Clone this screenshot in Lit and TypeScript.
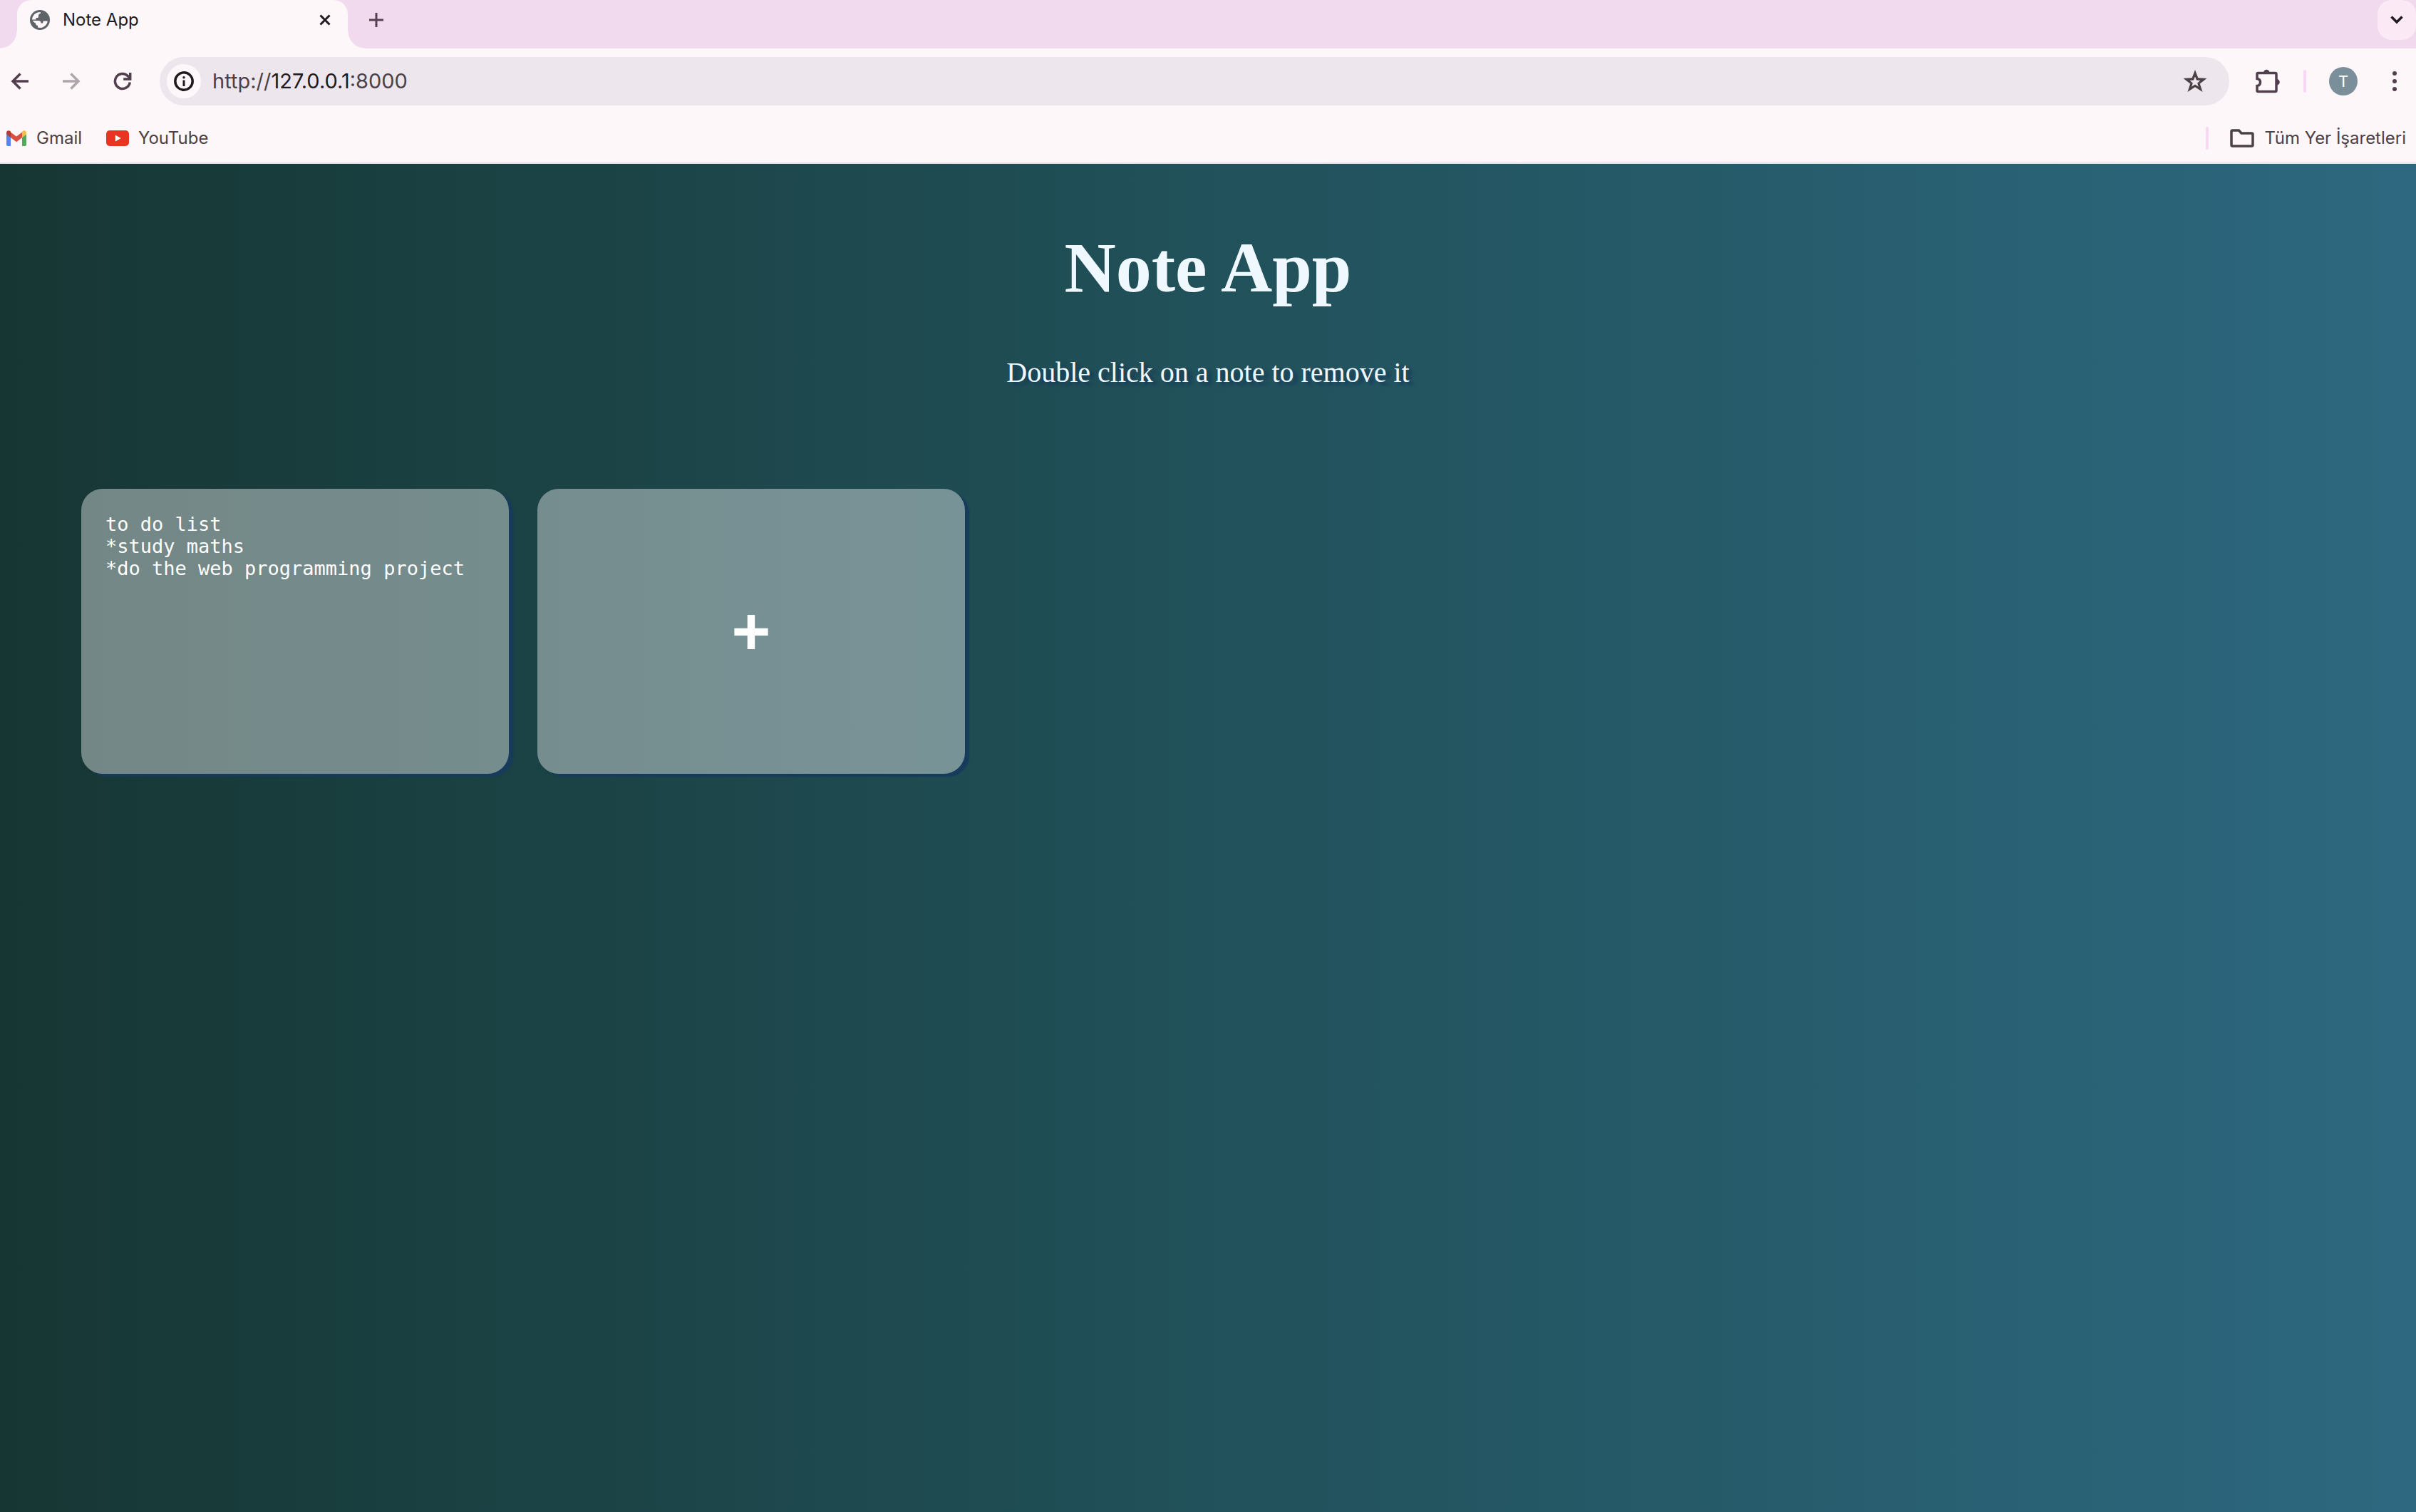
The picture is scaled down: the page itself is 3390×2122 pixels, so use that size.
import { LitElement, html, css } from "lit";
import { customElement, property, state } from "lit/decorators.js";

@customElement("browser-chrome")
export class BrowserChrome extends LitElement {
  @property() pageTitle = "";

  static styles = css`
    :host {
      display: block;
      font-family: Inter, "Liberation Sans", sans-serif;
      color: #4b4146;
      background: #fdf7fa;
      border-bottom: 2px solid #e9e0e7;
    }
    * {
      box-sizing: border-box;
    }
    button {
      border: 0;
      padding: 0;
      background: none;
      color: inherit;
      font: inherit;
      display: flex;
      align-items: center;
      justify-content: center;
      cursor: pointer;
    }
    svg {
      display: block;
      flex: none;
    }
    .tabs {
      display: flex;
      height: 68px;
      padding-left: 24px;
      background: #f2daee;
    }
    .tab {
      position: relative;
      display: flex;
      align-items: center;
      width: 464px;
      height: 68px;
      padding: 0 16px 12px 18px;
      gap: 18px;
      border-radius: 20px 20px 0 0;
      background: #fdf7fa;
      color: #1f1a1e;
      font-size: 24px;
      line-height: 28px;
    }
    .tab::before,
    .tab::after {
      content: "";
      position: absolute;
      bottom: 0;
      width: 24px;
      height: 24px;
    }
    .tab::before {
      right: 100%;
      background: radial-gradient(circle at 0 0, transparent 23px, #fdf7fa 24px);
    }
    .tab::after {
      left: 100%;
      background: radial-gradient(circle at 100% 0, transparent 23px, #fdf7fa 24px);
    }
    .label {
      flex: 1;
    }
    .close {
      width: 32px;
      height: 32px;
    }
    .add {
      width: 56px;
      height: 56px;
      margin-left: 12px;
      color: #56414f;
    }
    .search {
      width: 54px;
      height: 56px;
      margin-left: auto;
      border-radius: 20px;
      background: #fbeaf6;
      color: #1f1a1e;
    }
    .toolbar {
      display: flex;
      align-items: center;
      height: 92px;
      padding: 0 14px 0 0;
      color: #523f4d;
    }
    .nav {
      width: 56px;
      height: 56px;
      margin-right: 16px;
    }
    .nav.off {
      color: #aea6ab;
    }
    .omnibox {
      flex: 1;
      display: flex;
      align-items: center;
      height: 68px;
      margin-left: 8px;
      padding: 0 28px 0 10px;
      border-radius: 34px;
      background: #ede6ed;
    }
    .info {
      width: 48px;
      height: 48px;
      border-radius: 50%;
      background: #fdf7fa;
      color: #1f1a1e;
    }
    .url {
      flex: 1;
      margin-left: 16px;
      font-size: 29px;
      line-height: 36px;
      color: #4b4146;
      text-decoration: none;
    }
    .host {
      color: #1f1a1e;
    }
    .star {
      width: 40px;
      height: 40px;
      color: #4b4146;
    }
    .ext {
      width: 56px;
      height: 56px;
      margin-left: 26px;
    }
    .rule {
      width: 4px;
      height: 32px;
      border-radius: 2px;
      background: #f8d8f2;
    }
    .toolbar .rule {
      margin-left: 22px;
    }
    .avatar {
      width: 40px;
      height: 40px;
      margin-left: 32px;
      border-radius: 50%;
      background: #7b8f9b;
      color: #fff;
      font-size: 22px;
    }
    .more {
      width: 32px;
      height: 56px;
      margin-left: 36px;
    }
    .bookmarks {
      display: flex;
      align-items: center;
      height: 68px;
      padding: 0 14px 0 8px;
      font-size: 24px;
      line-height: 28px;
    }
    .bookmarks a {
      display: flex;
      align-items: center;
      gap: 13px;
      margin-right: 34px;
      color: inherit;
      text-decoration: none;
    }
    .bookmarks .rule {
      margin-left: auto;
      margin-right: 30px;
    }
    .bookmarks button {
      gap: 14px;
    }
  `;

  render() {
    return html`
      <div class="tabs">
        <div class="tab">
          <svg width="28" height="28" viewBox="0 0 28 28">
            <circle cx="14" cy="14" r="14" fill="#5f6368" />
            <path d="M14.500 3c.8 1 .8 1.600 0 2-2 .8-2.500 1.500-2.500 3v1.500c0 1-.8 1.500-2 1.500H8.500v2.500H3A11 11 0 0 1 14.500 3zM3.200 15H12c2.500 0 3.500 1.200 3.500 3.500h2.800V17c0-1 .6-1.500 1.600-1.500h4.900A11 11 0 0 1 11 24.600V22c-2-.2-2.800-1.200-2.800-3z" fill="#fdf7fa" />
          </svg>
          <span class="label">${this.pageTitle}</span>
          <button class="close" aria-label="Close tab">
            <svg width="16" height="16" viewBox="0 0 16 16" fill="none" stroke="currentColor" stroke-width="3"><path d="M1.500 1.500l13 13M14.500 1.500l-13 13" /></svg>
          </button>
        </div>
        <button class="add" aria-label="New tab">
          <svg width="20" height="20" viewBox="0 0 20 20" fill="none" stroke="currentColor" stroke-width="3"><path d="M10 0v20M0 10h20" /></svg>
        </button>
        <button class="search" aria-label="Search tabs">
          <svg width="18" height="12" viewBox="0 0 18 12" fill="none" stroke="currentColor" stroke-width="3.500"><path d="M1.500 1.500L9 9l7.500-7.500" /></svg>
        </button>
      </div>
      <div class="toolbar">
        <button class="nav" aria-label="Back">
          <svg width="26" height="26" viewBox="0 0 26 26" fill="none" stroke="currentColor" stroke-width="3.500"><path d="M25 13H3M13.500 2.500L3 13l10.500 10.500" /></svg>
        </button>
        <button class="nav off" aria-label="Forward">
          <svg width="26" height="26" viewBox="0 0 26 26" fill="none" stroke="currentColor" stroke-width="3.500"><path d="M1 13h22M12.500 2.500L23 13 12.500 23.500" /></svg>
        </button>
        <button class="nav" aria-label="Reload">
          <svg width="26" height="26" viewBox="0 0 26 26" fill="none" stroke="currentColor" stroke-width="3.500"><path d="M23.300 14.500A10.500 10.500 0 1 1 20.500 5.700L23 8.500M23.700 1v9h-9.500" /></svg>
        </button>
        <div class="omnibox">
          <button class="info" aria-label="Site information">
            <svg width="28" height="28" viewBox="0 0 28 28"><circle cx="14" cy="14" r="12.200" fill="none" stroke="currentColor" stroke-width="3.500" /><path d="M12.500 12.500h3v8.500h-3z" fill="currentColor" /><circle cx="14" cy="8.800" r="1.700" fill="currentColor" /></svg>
          </button>
          <a class="url" href="http://127.0.0.1:8000">http://<span class="host">127.0.0.1</span>:8000</a>
          <button class="star" aria-label="Bookmark this page">
            <svg width="34" height="32" viewBox="0 0 34 32"><path d="M17 0l4.300 11.300L33.500 12l-9.700 7.500L27.500 31 17 24.300 6.500 31l3.700-11.500L.5 12l12.200-.7zM17 9.500l-2 5-5.400.4 4.200 3.500-1.500 5.200 4.700-3 4.700 3-1.500-5.200 4.200-3.500-5.400-.4z" fill="currentColor" fill-rule="evenodd" /></svg>
          </button>
        </div>
        <button class="ext" aria-label="Extensions">
          <svg width="34" height="34" viewBox="0 0 34 34">
            <path d="M3.500 5.500h24a1.500 1.500 0 0 1 1.500 1.500v23a1.500 1.500 0 0 1-1.500 1.500h-24A1.500 1.500 0 0 1 2 30v-6.500c3.200-.3 4.500-2.200 4.500-5s-1.300-4.700-4.500-5V7a1.500 1.500 0 0 1 1.500-1.500z" fill="none" stroke="currentColor" stroke-width="3.500" />
            <path d="M11 5a4.300 4.300 0 0 1 8.600 0zM29.500 14a4.300 4.300 0 0 1 0 8.600z" fill="currentColor" />
          </svg>
        </button>
        <span class="rule"></span>
        <button class="avatar" aria-label="Profile">T</button>
        <button class="more" aria-label="Menu">
          <svg width="6" height="28" viewBox="0 0 6 28" fill="currentColor"><circle cx="3" cy="3" r="3" /><circle cx="3" cy="14" r="3" /><circle cx="3" cy="25" r="3" /></svg>
        </button>
      </div>
      <nav class="bookmarks">
        <a href="https://mail.google.com">
          <svg width="30" height="22" viewBox="0 0 30 22">
            <path d="M1 5l6 4.500V22H3a2 2 0 0 1-2-2z" fill="#5484ed" />
            <path d="M23 9.500L29 5v15a2 2 0 0 1-2 2h-4z" fill="#58a55c" />
            <path d="M7 2.500l8 6 8-6v7.500l-8 6.200L7 10z" fill="#d95040" />
            <path d="M1 3.500C1 .5 4-.7 6.200 1L7 1.700V10L1 5.500z" fill="#b33a2e" />
            <path d="M29 3.500c0-3-3-4.200-5.200-2.500l-.8.700V10l6-4.500z" fill="#f2c043" />
          </svg>
          <span>Gmail</span>
        </a>
        <a href="https://www.youtube.com">
          <svg width="32" height="22" viewBox="0 0 32 22"><rect width="32" height="22" rx="5" fill="#e93323" /><path d="M12.800 6.500l8 4.500-8 4.500z" fill="#fff" /></svg>
          <span>YouTube</span>
        </a>
        <span class="rule"></span>
        <button>
          <svg width="34" height="26" viewBox="0 0 34 26" fill="none" stroke="currentColor" stroke-width="3.500"><path d="M3.500 2h9l3.500 4h14.500A1.500 1.500 0 0 1 32 7.500V22.500a1.500 1.500 0 0 1-1.500 1.500h-27A1.500 1.500 0 0 1 2 22.500v-19A1.500 1.500 0 0 1 3.500 2z" /></svg>
          <span>Tüm Yer İşaretleri</span>
        </button>
      </nav>
    `;
  }
}

@customElement("note-board")
export class NoteBoard extends LitElement {
  @state() private notes = ["to do list\n*study maths\n*do the web programming project"];

  static styles = css`
    :host {
      display: block;
      padding: 90px 114px;
      background: linear-gradient(to right, #163633, #21515a 50%, #2d6880);
      color: #f0f8ff;
      font-family: "Liberation Serif", serif;
    }
    h1 {
      margin: 0;
      text-align: center;
      font-size: 100px;
      line-height: 112px;
    }
    p {
      margin: 68px 0 0;
      text-align: center;
      font-size: 40px;
      line-height: 46px;
      text-shadow: 6px 4px 4px #173b5c;
    }
    .grid {
      display: grid;
      grid-template-columns: repeat(auto-fill, 600px);
      gap: 40px;
      margin-top: 140px;
    }
    .card {
      box-sizing: border-box;
      display: block;
      width: 100%;
      height: 400px;
      margin: 0;
      padding: 34px;
      border: 0;
      border-radius: 30px;
      outline: 0;
      background: rgba(255, 255, 255, 0.4);
      box-shadow: 6px 4px 2px #173b5c;
      color: #fff;
    }
    .note {
      resize: none;
      font-family: "DejaVu Sans Mono", monospace;
      font-size: 27px;
      line-height: 31px;
    }
    .add {
      font-family: "Liberation Sans", sans-serif;
      font-size: 94px;
      font-weight: 700;
      line-height: 92px;
      cursor: pointer;
    }
  `;

  private add() {
    this.notes = [...this.notes, ""];
  }

  private remove(index: number) {
    this.notes = this.notes.filter((_, i) => i !== index);
  }

  render() {
    return html`
      <h1>Note App</h1>
      <p>Double click on a note to remove it</p>
      <div class="grid">
        ${this.notes.map(
          (text, i) => html`<textarea class="card note" aria-label="Note" spellcheck="false" .value=${text} @dblclick=${() => this.remove(i)}></textarea>`
        )}
        <button class="card add" aria-label="Add note" @click=${this.add}>+</button>
      </div>
    `;
  }
}

@customElement("app-root")
export class AppRoot extends LitElement {
  static styles = css`
    :host {
      display: flex;
      flex-direction: column;
      min-height: 100vh;
    }
    note-board {
      flex: 1;
    }
  `;

  render() {
    return html`
      <browser-chrome .pageTitle=${"Note App"}></browser-chrome>
      <note-board></note-board>
    `;
  }
}
